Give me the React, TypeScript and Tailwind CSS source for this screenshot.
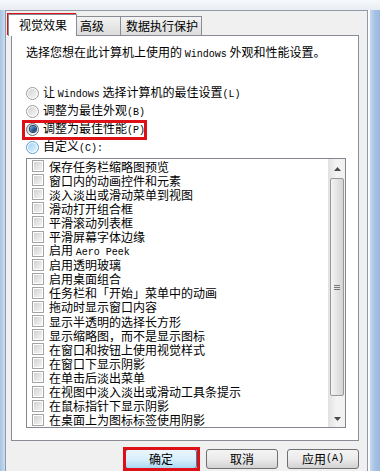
import type { ReactNode } from "react"

const items: ReactNode[] = [
  "保存任务栏缩略图预览",
  "窗口内的动画控件和元素",
  "淡入淡出或滑动菜单到视图",
  "滑动打开组合框",
  "平滑滚动列表框",
  "平滑屏幕字体边缘",
  <>启用 <M>Aero Peek</M></>,
  "启用透明玻璃",
  "启用桌面组合",
  "任务栏和「开始」菜单中的动画",
  "拖动时显示窗口内容",
  "显示半透明的选择长方形",
  "显示缩略图，而不是显示图标",
  "在窗口和按钮上使用视觉样式",
  "在窗口下显示阴影",
  "在单击后淡出菜单",
  "在视图中淡入淡出或滑动工具条提示",
  "在鼠标指针下显示阴影",
  "在桌面上为图标标签使用阴影",
]

// SimSun-like half width latin
function M({ children }: { children: ReactNode }) {
  return <span className="font-['Liberation_Mono',monospace] text-[10px]">{children}</span>
}

function Radio({ state }: { state?: "checked" | "hover" }) {
  if (state === "checked") {
    return (
      <span className="flex items-center justify-center w-[13px] h-[13px] rounded-full border border-[#6b6b6b] bg-linear-to-br from-[#d0d0d0] to-[#fafafa] shrink-0">
        <span className="w-[6px] h-[6px] rounded-full bg-linear-to-br from-[#6cb4e8] to-[#0c2a56] ring-1 ring-[#1b3f6e]" />
      </span>
    )
  }
  if (state === "hover") {
    return (
      <span className="flex items-center justify-center w-[13px] h-[13px] rounded-full border border-[#5b9bcb] bg-white shrink-0">
        <span className="w-[9px] h-[9px] rounded-full bg-linear-to-br from-[#9fd2f3] to-[#e3f4fd]" />
      </span>
    )
  }
  return (
    <span className="flex items-center justify-center w-[13px] h-[13px] rounded-full border border-[#9a9a9a] bg-white shrink-0">
      <span className="w-[9px] h-[9px] rounded-full bg-linear-to-br from-[#d3d3d3] to-[#f6f6f6]" />
    </span>
  )
}

function Check() {
  return (
    <span className="w-[12px] h-[12px] border border-[#a3a3a3] bg-white p-[1px] shrink-0 flex">
      <span className="flex-1 bg-linear-to-br from-[#d2d2d2] to-[#f5f5f5]" />
    </span>
  )
}

function Arrow({ down }: { down?: boolean }) {
  return (
    <svg width="7" height="4" viewBox="0 0 7 4">
      <polygon points={down ? "0,0 7,0 3.5,4" : "3.5,0 7,4 0,4"} fill="#4a4a4a" />
    </svg>
  )
}

function Button({ children, main }: { children: ReactNode; main?: boolean }) {
  return (
    <div
      className={
        main
          ? "w-[72px] h-[20px] flex items-center justify-center rounded-[3px] border border-[#3c7fb1] bg-linear-to-b from-[#eaf6fd] via-[#d9f0fc] to-[#a9d8f3]"
          : "w-[72px] h-[20px] flex items-center justify-center rounded-[3px] border border-[#707070] bg-linear-to-b from-[#f4f4f4] via-[#ebebeb] to-[#d2d2d2]"
      }
    >
      {children}
    </div>
  )
}

export default function App() {
  return (
    <div className="relative w-[380px] h-[471px] overflow-hidden flex flex-col bg-[#f0f0f0] text-black text-[12px] leading-[14px] font-['Noto_Sans_CJK_SC',sans-serif]">
      {/* top frame */}
      <div className="h-[10px] bg-linear-to-b from-[#f6f8fb] to-[#e8edf3]" />

      <div className="flex flex-1">
        {/* left frame */}
        <div className="w-[5px] bg-linear-to-r from-[#a8c3e2] to-[#cadcf0]" />

        {/* dialog */}
        <div className="w-[363px] border-l border-t border-r border-[#8f9aa6] bg-[#f0f0f0] pl-[5px] pr-[8px] flex flex-col">
          {/* TABS */}
          <div className="h-[24px] flex items-end ml-[-3px]">
            <div className="relative z-10 w-[69px] h-[22px] -mb-px border border-b-0 border-[#898c95] bg-white pl-[10px] pt-[3px] whitespace-nowrap">
              视觉效果
            </div>
            <div className="w-[45px] h-[19px] -ml-px border border-b-0 border-[#898c95] bg-linear-to-b from-[#f3f3f3] to-[#dcdcdc] pl-[3px] pt-[2px] whitespace-nowrap">
              高级
            </div>
            <div className="w-[82px] h-[19px] -ml-px border border-b-0 border-[#898c95] bg-linear-to-b from-[#f3f3f3] to-[#dcdcdc] pl-[5px] pt-[2px] whitespace-nowrap">
              数据执行保护
            </div>
          </div>

          {/* PANEL */}
          <div className="w-[348px] h-[406px] border border-[#898c95] bg-white pt-[9px] pl-[14px] flex flex-col">
            <div className="h-[14px] whitespace-nowrap">
              选择您想在此计算机上使用的 <M>Windows</M> 外观和性能设置。
            </div>

            <div className="mt-[25px] flex flex-col">
              <div className="h-[18px] flex items-center gap-[4px] whitespace-nowrap">
                <Radio />
                <span>让 <M>Windows</M> 选择计算机的最佳设置<M>(L)</M></span>
              </div>
              <div className="h-[18px] flex items-center gap-[4px] whitespace-nowrap">
                <Radio />
                <span>调整为最佳外观<M>(B)</M></span>
              </div>
              <div className="h-[18px] flex items-center gap-[4px] whitespace-nowrap">
                <Radio state="checked" />
                <span>调整为最佳性能<M>(P)</M></span>
              </div>
              <div className="h-[18px] flex items-center gap-[4px] whitespace-nowrap">
                <Radio state="hover" />
                <span>自定义<M>(C):</M></span>
              </div>
            </div>

            {/* LIST */}
            <div className="mt-[2px] w-[320px] h-[270px] border border-[#828790] flex">
              <div className="flex-1 flex flex-col">
                {items.map((it, i) => (
                  <div key={i} className="h-[14.1px] shrink-0 flex items-center pl-[5px] gap-[5px] whitespace-nowrap">
                    <Check />
                    <span className="block leading-[13px]">{it}</span>
                  </div>
                ))}
              </div>

              {/* SCROLLBAR */}
              <div className="w-[17px] flex flex-col bg-linear-to-r from-[#e4e4e4] via-[#f4f4f4] to-[#f0f0f0] border-l border-[#e2e2e2]">
                <div className="h-[19px] flex items-center justify-center">
                  <Arrow />
                </div>
                <div className="h-[218px] mx-[1px] rounded-[2px] border border-[#989898] bg-linear-to-r from-[#f5f5f5] to-[#d4d4d4] flex flex-col items-center justify-center gap-[1px]">
                  <span className="w-[6px] h-px bg-[#777]" />
                  <span className="w-[6px] h-px bg-[#777]" />
                  <span className="w-[6px] h-px bg-[#777]" />
                </div>
                <div className="flex-1" />
                <div className="h-[17px] flex items-center justify-center">
                  <Arrow down />
                </div>
              </div>
            </div>
          </div>

          {/* BUTTONS */}
          <div className="mt-[8px] flex justify-end gap-[9px]">
            <Button main>确定</Button>
            <Button>取消</Button>
            <Button>应用<M>(A)</M></Button>
          </div>
        </div>

        {/* right frame */}
        <div className="w-[2px] bg-[#fafcfe]" />
        <div className="w-[10px] bg-linear-to-r from-[#c4d8ee] via-[#a6c2e3] to-[#9ab9df]" />
      </div>

      {/* red marks */}
      <div className="absolute left-[7px] top-[13px] w-[69px] h-[22px] border-[3px] border-[#dc1016]" />
      <div className="absolute left-[22px] top-[120px] w-[125px] h-[20px] border-[3px] border-[#dc1016]" />
      <div className="absolute left-[123px] top-[447px] w-[77px] h-[24px] border-[3px] border-[#dc1016]" />
    </div>
  )
}
